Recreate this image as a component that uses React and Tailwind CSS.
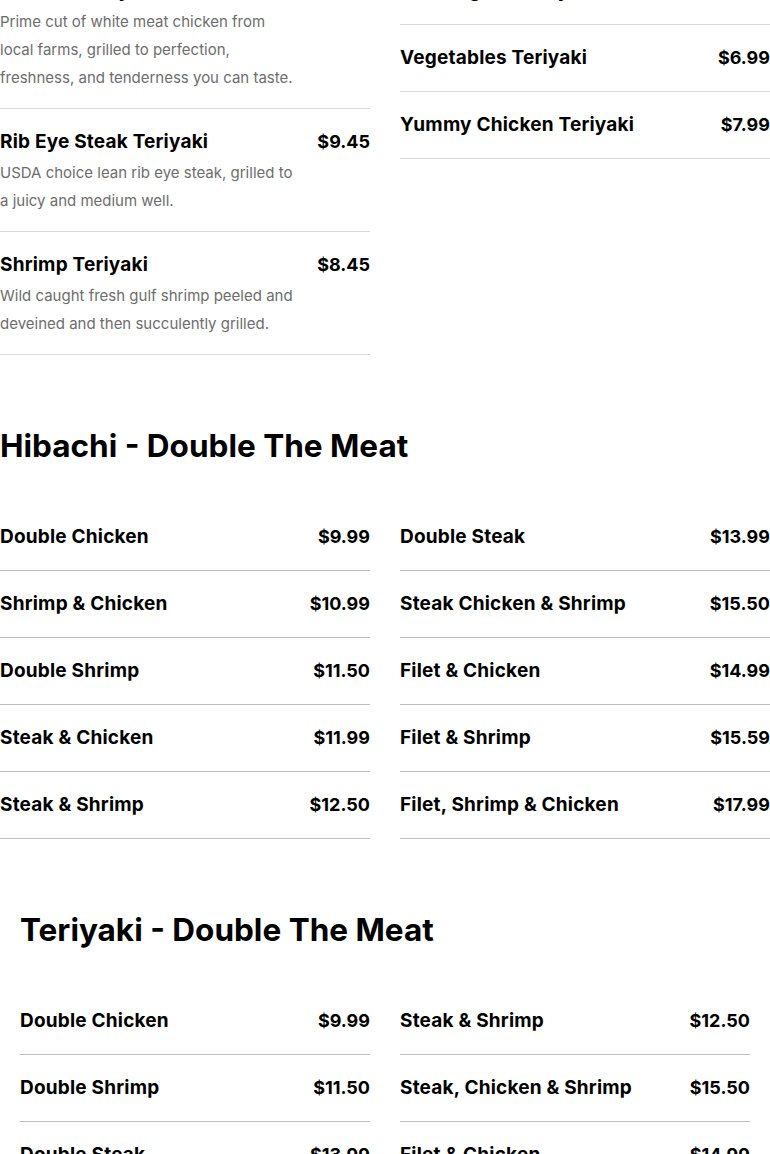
const teriyaki = {
  left: [
    {
      name: "Chicken Teriyaki",
      price: "$7.95",
      desc: "Prime cut of white meat chicken from local farms, grilled to perfection, freshness, and tenderness you can taste.",
    },
    {
      name: "Rib Eye Steak Teriyaki",
      price: "$9.45",
      desc: "USDA choice lean rib eye steak, grilled to a juicy and medium well.",
    },
    {
      name: "Shrimp Teriyaki",
      price: "$8.45",
      desc: "Wild caught fresh gulf shrimp peeled and deveined and then succulently grilled.",
    },
  ],
  right: [
    { name: "Filet Mignon Teriyaki", price: "$11.95" },
    { name: "Vegetables Teriyaki", price: "$6.99" },
    { name: "Yummy Chicken Teriyaki", price: "$7.99" },
  ],
};

const hibachiDouble = {
  left: [
    { name: "Double Chicken", price: "$9.99" },
    { name: "Shrimp & Chicken", price: "$10.99" },
    { name: "Double Shrimp", price: "$11.50" },
    { name: "Steak & Chicken", price: "$11.99" },
    { name: "Steak & Shrimp", price: "$12.50" },
  ],
  right: [
    { name: "Double Steak", price: "$13.99" },
    { name: "Steak Chicken & Shrimp", price: "$15.50" },
    { name: "Filet & Chicken", price: "$14.99" },
    { name: "Filet & Shrimp", price: "$15.59" },
    { name: "Filet, Shrimp & Chicken", price: "$17.99" },
  ],
};

const teriyakiDouble = {
  left: [
    { name: "Double Chicken", price: "$9.99" },
    { name: "Double Shrimp", price: "$11.50" },
    { name: "Double Steak", price: "$13.99" },
    { name: "Filet & Shrimp", price: "$15.59" },
  ],
  right: [
    { name: "Steak & Shrimp", price: "$12.50" },
    { name: "Steak, Chicken & Shrimp", price: "$15.50" },
    { name: "Filet & Chicken", price: "$14.99" },
    { name: "Filet, Shrimp & Chicken", price: "$17.99" },
  ],
};

function MenuItem({ item, line }) {
  return (
    <div className={`border-b ${line} pt-[22px] ${item.desc ? "pb-[16px]" : "pb-[22px]"}`}>
      <div className="flex justify-between items-center leading-[22px] font-bold text-black">
        <span className="text-[19px] tracking-[0.2px]">{item.name}</span>
        <span className="text-[18px]">{item.price}</span>
      </div>
      {item.desc && (
        <p className="mt-[6px] max-w-[298px] text-[15px] leading-[28px] text-[#6d6d6d]">
          {item.desc}
        </p>
      )}
    </div>
  );
}

function MenuGrid({ data, line }) {
  return (
    <div className="grid grid-cols-2 gap-x-[30px]">
      <div>
        {data.left.map((i) => (
          <MenuItem key={i.name} item={i} line={line} />
        ))}
      </div>
      <div>
        {data.right.map((i) => (
          <MenuItem key={i.name} item={i} line={line} />
        ))}
      </div>
    </div>
  );
}

export default function App() {
  return (
    <div className="w-[770px] h-[1154px] overflow-hidden bg-white font-['Inter',sans-serif]">
      <div className="-mt-[42px]">
        {/* Teriyaki (oben abgeschnitten) */}
        <MenuGrid data={teriyaki} line="border-[#d9d9d9]" />

        {/* Hibachi - Double */}
        <section className="pt-[69px]">
          <h2 className="text-[31.5px] leading-[44px] font-bold text-black mb-[36px]">
            Hibachi - Double The Meat
          </h2>
          <MenuGrid data={hibachiDouble} line="border-[#bdbdbd]" />
        </section>

        {/* Teriyaki - Double */}
        <section className="pt-[69px] px-5">
          <h2 className="text-[31.5px] leading-[44px] font-bold text-black mb-[36px]">
            Teriyaki - Double The Meat
          </h2>
          <MenuGrid data={teriyakiDouble} line="border-[#bdbdbd]" />
        </section>
      </div>
    </div>
  );
}
